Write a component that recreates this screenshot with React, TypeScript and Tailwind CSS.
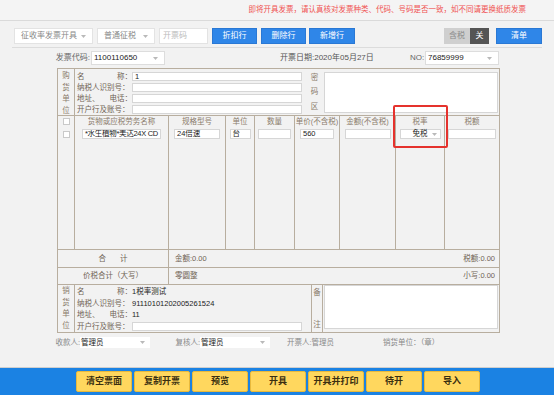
import React from "react";

function Caret() {
  return (
    <svg width="5" height="3" viewBox="0 0 5 3" className="shrink-0">
      <polygon points="0,0 5,0 2.5,3" fill="#b9b9b9" />
    </svg>
  );
}

function Box({ value = "", className = "" }: { value?: string; className?: string }) {
  return (
    <div className={`flex items-center overflow-hidden whitespace-nowrap bg-white border border-[#d6d6d6] px-[2px] text-[#222] ${className}`}>
      {value}
    </div>
  );
}

const goods = [
  { title: "货物或应税劳务名称", w: "w-[94px]", input: "w-[79px] tracking-[-0.3px]", value: "*水生植物*美达24X CD" },
  { title: "规格型号", w: "w-[57px]", input: "w-[46px]", value: "24倍速" },
  { title: "单位", w: "w-[29px]", input: "w-[21px]", value: "台" },
  { title: "数量", w: "w-[40px]", input: "w-[33px]", value: "" },
  { title: "单价(不含税)", w: "w-[45px]", input: "w-[34px]", value: "560" },
  { title: "金额(不含税)", w: "w-[56px]", input: "w-[46px]", value: "" },
];

const actions = ["清空票面", "复制开票", "预览", "开具", "开具并打印", "待开", "导入"];

function PartyLabel({ row }: { row: string[] }) {
  return (
    <div className="w-[55px] shrink-0 flex justify-between text-[#6f6254]">
      {row.map((t) => (
        <span key={t}>{t}</span>
      ))}
    </div>
  );
}

function SideTitle({ chars, pad }: { chars: string[]; pad: string }) {
  return (
    <div className={`w-[17px] shrink-0 border-r border-[#b8ae9f] flex flex-col items-center text-[#8a7b6b] ${pad}`}>
      {chars.map((c) => (
        <span key={c} className="leading-[11.5px]">{c}</span>
      ))}
    </div>
  );
}

export default function App() {
  const buyerRows = [["名", "称："], ["纳税人识别号："], ["地址、", "电话："], ["开户行及账号："]];
  const sellerValues = ["1税率测试", "91110101202005261524", "11"];

  return (
    <div className="relative w-[554px] h-[395px] overflow-hidden bg-[#f2f2f2] flex flex-col font-['Liberation_Sans','Noto_Sans_CJK_SC',sans-serif] text-[7.5px] leading-none text-[#333]">
      {/* notice */}
      <div className="h-[21px] shrink-0 border-b border-[#dadada] bg-[#f4f4f4] flex items-center justify-end pr-[28px] text-[#f05252]">
        即将开具发票，请认真核对发票种类、代码、号码是否一致，如不同请更换纸质发票
      </div>

      {/* toolbar */}
      <div className="mx-[12px] h-[27px] shrink-0 border-b border-[#dcdcdc] flex items-start pt-[7px] pl-[2px] text-[8px]">
        <div className="w-[79px] h-[16px] bg-white border border-[#e3e3e3] flex items-center justify-between px-[6px] text-[#888]">
          <span>征收率发票开具</span>
          <Caret />
        </div>
        <div className="ml-[4px] w-[58px] h-[16px] bg-white border border-[#e3e3e3] flex items-center justify-between px-[6px] text-[#888]">
          <span>普通征税</span>
          <Caret />
        </div>
        <div className="ml-[4px] w-[49px] h-[16px] bg-white border border-[#e3e3e3] flex items-center px-[3px] text-[#bbb]">
          开票码
        </div>
        <div className="ml-[4px] w-[45px] h-[16px] bg-[#2f86e8] border border-[#2a78d4] flex items-center justify-center text-white">折扣行</div>
        <div className="ml-[4px] w-[45px] h-[16px] bg-[#2f86e8] border border-[#2a78d4] flex items-center justify-center text-white">删除行</div>
        <div className="ml-[3px] w-[46px] h-[16px] bg-[#2f86e8] border border-[#2a78d4] flex items-center justify-center text-white">新增行</div>
        <div className="flex-1" />
        <div className="w-[26px] h-[16px] bg-[#cfcfcf] flex items-center justify-center text-[#8a8a8a]">含税</div>
        <div className="w-[19px] h-[16px] bg-[#555] flex items-center justify-center text-white">关</div>
        <div className="ml-[7px] w-[46px] h-[16px] bg-[#2f86e8] border border-[#2a78d4] flex items-center justify-center text-white">清单</div>
      </div>

      {/* invoice header */}
      <div className="h-[20px] shrink-0 flex items-center text-[8px]">
        <div className="w-[91px] text-right pr-[1px] text-[#666]">发票代码:</div>
        <div className="w-[74px] h-[14px] bg-white border border-[#ddd] flex items-center justify-between px-[2px] pr-[6px] text-[#222]">
          <span>1100110650</span>
          <Caret />
        </div>
        <div className="w-[115px]" />
        <div className="w-[130px] text-[#555]">开票日期:2020年05月27日</div>
        <div className="w-[15px] text-[#666]">NO:</div>
        <div className="w-[74px] h-[14px] bg-white border border-[#ddd] flex items-center justify-between px-[2px] pr-[6px] text-[#222]">
          <span>76859999</span>
          <Caret />
        </div>
      </div>

      {/* invoice body */}
      <div className="ml-[57px] w-[443px] h-[265px] shrink-0 border border-[#b8ae9f] flex flex-col">
        {/* buyer */}
        <div className="h-[47px] shrink-0 border-b border-[#b8ae9f] flex">
          <SideTitle chars={["购", "货", "单", "位"]} pad="pt-[1px]" />
          <div className="w-[230px] shrink-0 flex flex-col pt-[2px]">
            {buyerRows.map((row, i) => (
              <div key={i} className="h-[11.5px] flex items-center pl-[2px] pr-[3px]">
                <PartyLabel row={row} />
                <Box className="flex-1 h-[9px]" value={i === 0 ? "1" : ""} />
              </div>
            ))}
          </div>
          <div className="w-[19px] shrink-0 flex flex-col justify-between items-center py-[5px] text-[#8a7b6b]">
            <span>密</span>
            <span>码</span>
            <span>区</span>
          </div>
          <div className="mt-[3px] h-[41px] w-[174px] bg-white border border-[#d6d6d6]" />
        </div>

        {/* goods */}
        <div className="h-[134px] shrink-0 border-b border-[#b8ae9f] flex">
          <div className="w-[17px] shrink-0 border-r border-[#b8ae9f] flex flex-col items-center pt-[2px]">
            <div className="w-[7px] h-[7px] bg-white border border-[#c9c9c9]" />
            <div className="mt-[6px] w-[7px] h-[7px] bg-white border border-[#c9c9c9]" />
          </div>
          {goods.map((g) => (
            <div key={g.title} className={`${g.w} shrink-0 border-r border-[#b8ae9f] flex flex-col items-center`}>
              <div className="h-[12px] flex items-center text-[#8a7b6b] whitespace-nowrap">{g.title}</div>
              <Box className={`${g.input} mt-[1px] h-[10px]`} value={g.value} />
            </div>
          ))}
          <div className="w-[49px] shrink-0 border-r border-[#b8ae9f] flex flex-col items-center">
            <div className="h-[12px] flex items-center text-[#8a7b6b]">税率</div>
            <div className="w-[41px] mt-[1px] h-[10px] bg-white border border-[#d6d6d6] flex items-center justify-end gap-[4px] pr-[3px] text-[#222]">
              <span>免税</span>
              <Caret />
            </div>
          </div>
          <div className="flex-1 flex flex-col items-center">
            <div className="h-[12px] flex items-center text-[#8a7b6b]">税额</div>
            <Box className="w-[48px] mt-[1px] h-[10px]" />
          </div>
        </div>

        {/* totals */}
        <div className="h-[18px] shrink-0 border-b border-[#b8ae9f] flex items-center">
          <div className="w-[111px] h-full border-r border-[#b8ae9f] flex items-center justify-center gap-[14px] text-[#6f6254]">
            <span>合</span>
            <span>计</span>
          </div>
          <div className="flex-1 flex justify-between pl-[6px] pr-[4px] text-[#6f6254]">
            <span>金额:0.00</span>
            <span>税额:0.00</span>
          </div>
        </div>
        <div className="h-[17px] shrink-0 border-b border-[#b8ae9f] flex items-center">
          <div className="w-[111px] h-full border-r border-[#b8ae9f] flex items-center justify-center text-[#6f6254]">
            价税合计（大写）
          </div>
          <div className="flex-1 flex justify-between pl-[6px] pr-[4px] text-[#6f6254]">
            <span>零圆整</span>
            <span>小写:0.00</span>
          </div>
        </div>

        {/* seller */}
        <div className="flex-1 flex">
          <SideTitle chars={["销", "货", "单", "位"]} pad="pt-0" />
          <div className="w-[236px] shrink-0 flex flex-col pt-[1px]">
            {buyerRows.map((row, i) => (
              <div key={i} className="h-[11.5px] flex items-center pl-[2px] pr-[9px]">
                <PartyLabel row={row} />
                {i < 3 ? (
                  <span className="text-[#222]">{sellerValues[i]}</span>
                ) : (
                  <Box className="flex-1 h-[9px]" />
                )}
              </div>
            ))}
          </div>
          <div className="w-[12px] shrink-0 border-l border-r border-[#b8ae9f] flex flex-col justify-between items-center py-[4px] text-[#8a7b6b]">
            <span>备</span>
            <span>注</span>
          </div>
          <div className="ml-[1px] mb-[3px] flex-1 mr-[1px] bg-white border border-[#d6d6d6]" />
        </div>
      </div>

      {/* signatures */}
      <div className="mt-[4px] h-[11px] shrink-0 flex items-center text-[#888]">
        <div className="w-[80px] text-right">收款人:</div>
        <div className="w-[70px] h-[11px] bg-white flex items-center justify-between pl-[1px] pr-[5px] text-[#222]">
          <span>管理员</span>
          <Caret />
        </div>
        <div className="w-[50px] text-right">复核人:</div>
        <div className="w-[70px] h-[11px] bg-white flex items-center justify-between pl-[1px] pr-[5px] text-[#222]">
          <span>管理员</span>
          <Caret />
        </div>
        <div className="ml-[17px] w-[96px]">开票人:管理员</div>
        <div>销货单位：（章）</div>
      </div>

      <div className="flex-1" />

      {/* actions */}
      <div className="h-[28px] shrink-0 border-t border-[#cfcfcf] bg-[#1b82e3] flex items-center pl-[76px] gap-[2px]">
        {actions.map((a) => (
          <div
            key={a}
            className="w-[56px] h-[21px] rounded-[2px] bg-[#ffd75e] border border-[#e8b93c] flex items-center justify-center text-[9px] font-bold text-[#3b2f10]"
          >
            {a}
          </div>
        ))}
      </div>

      {/* highlight */}
      <div className="absolute left-[393px] top-[105px] w-[55px] h-[43px] border-2 border-[#e5322d] rounded-[2px]" />
    </div>
  );
}
